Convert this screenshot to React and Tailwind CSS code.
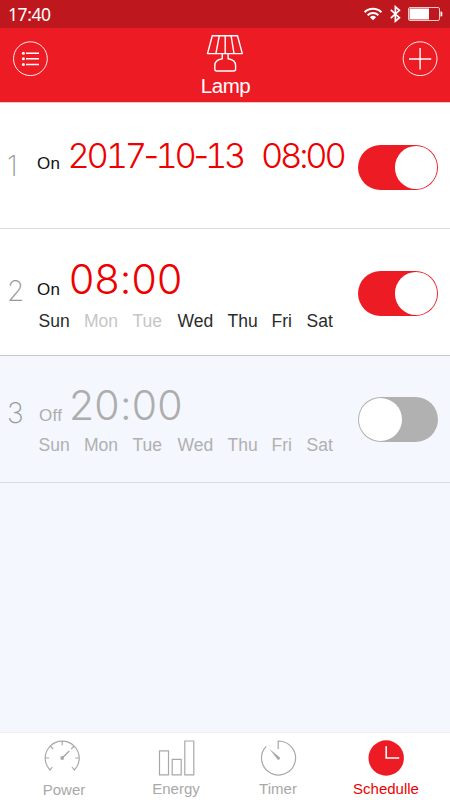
import React, { useState } from 'react';

const SCHEDULES = [
  { id: 1, action: 'On', date: ['2017', '10', '13'], time: '08:00', enabled: true },
  { id: 2, action: 'On', time: '08:00', enabled: true, off: ['Mon', 'Tue'] },
  { id: 3, action: 'Off', time: '20:00', enabled: false, off: [] },
];

const DAYS = [
  { name: 'Sun', width: 'w-[45.5px]' },
  { name: 'Mon', width: 'w-[48.5px]' },
  { name: 'Tue', width: 'w-[45px]' },
  { name: 'Wed', width: 'w-[50px]' },
  { name: 'Thu', width: 'w-[44px]' },
  { name: 'Fri', width: 'w-[35px]' },
  { name: 'Sat', width: 'w-[32px]' },
];

const StatusBar = () => (
  <div className="flex h-7 items-center justify-between bg-[#be171d] pl-2 pr-[7px] text-white">
    <span className="font-['Noto_Sans',sans-serif] text-[17.5px] leading-7 tracking-[-0.4px]">17:40</span>
    <div className="flex items-center">
      <svg width="20" height="14" viewBox="0 0 20 14" fill="none" stroke="#fff" strokeWidth="2">
        <path d="M1.6 5.2a12 12 0 0 1 16.8 0" />
        <path d="M4.6 8.2a7.8 7.8 0 0 1 10.8 0" />
        <path d="M10 13.2 6.9 10.3a4.5 4.5 0 0 1 6.2 0z" fill="#fff" stroke="none" />
      </svg>
      <svg className="ml-[7px]" width="11" height="18" viewBox="0 0 11 18" fill="none" stroke="#fff" strokeWidth="1.7">
        <path d="M0.8 4.8 9.4 12.7 5.4 16.2V1.8l4 3.5L0.8 13.2" />
      </svg>
      <svg className="ml-[7px]" width="35" height="14" viewBox="0 0 35 14">
        <rect x="0.5" y="0.5" width="31" height="13" rx="1.5" fill="none" stroke="#f3c9cb" />
        <rect x="1.5" y="1.5" width="19.5" height="11" fill="#fff" />
        <path d="M32.5 4.5h0.6a1.2 1.2 0 0 1 1.2 1.2v2.6a1.2 1.2 0 0 1-1.2 1.2h-0.6z" fill="#fff" />
      </svg>
    </div>
  </div>
);

const Header = () => (
  <header className="flex h-[75px] items-start justify-between border-b border-[#eec5ca] bg-[#ed1c24] px-3 text-white">
    <button className="mt-3 h-9 w-9">
      <svg width="36" height="36" viewBox="0 0 36 36" fill="none" stroke="#fff">
        <circle cx="18.4" cy="18.7" r="16.9" strokeWidth="0.9" />
        <path d="M14 13.2h13M14 18.7h13M14 24.4h13" strokeWidth="1.5" />
        <g fill="#fff" stroke="none">
          <circle cx="11.4" cy="13.2" r="1.5" />
          <circle cx="11.4" cy="18.7" r="1.5" />
          <circle cx="11.4" cy="24.4" r="1.5" />
        </g>
      </svg>
    </button>
    <div className="flex flex-col items-center pt-1.5">
      <svg width="38" height="40" viewBox="0 0 38 40" fill="none" stroke="#fff" strokeWidth="1.4" strokeLinejoin="round">
        <path d="M6.3 1.7h25.2l4.8 17.9H1.5z" />
        <path d="M13.3 1.7 9.9 19.6M19.2 1.7v17.9M25.1 1.7l2.9 17.9" />
        <path d="M16.3 19.6v5.2c-5 .8-7.5 3-7.5 6.7V35q0 2 2 2h16.8q2 0 2-2v-3.5c0-3.7-2.5-5.9-7.5-6.7v-5.2" />
      </svg>
      <h1 className="pl-px font-['Liberation_Sans',sans-serif] text-[20.5px] leading-6 tracking-[-0.5px]">Lamp</h1>
    </div>
    <button className="mt-3 h-9 w-9">
      <svg width="36" height="36" viewBox="0 0 36 36" fill="none" stroke="#fff">
        <circle cx="18.1" cy="18.7" r="16.9" strokeWidth="0.9" />
        <path d="M7 19h22.2M18.1 8v21.6" strokeWidth="1.4" />
      </svg>
    </button>
  </header>
);

const Toggle = ({ checked, onChange }) => (
  <button
    role="switch"
    aria-checked={checked}
    onClick={onChange}
    className={`flex h-[45px] w-20 items-center rounded-full px-px ${checked ? 'justify-end bg-[#ed1c24]' : 'justify-start bg-[#b1b1b1]'}`}
  >
    <span className="h-[42.5px] w-[42.5px] rounded-full bg-white" />
  </button>
);

const DateTime = ({ date, time }) => (
  <span className="-ml-[1.5px] flex text-[34.5px] font-light leading-10 tracking-[-3.2px] text-[#ee0000]">
    <span className="w-[76px] tabular-nums">{date[0]}</span>
    <span className="w-3">-</span>
    <span className="w-[38px] tabular-nums">{date[1]}</span>
    <span className="w-[11.5px]">-</span>
    <span className="w-[56px] tabular-nums">{date[2]}</span>
    <span className="tabular-nums">{time}</span>
  </span>
);

const ScheduleRow = ({ item, enabled, onToggle }) => (
  <li className={`flex border-b ${item.id === 1 ? 'h-[126px]' : 'h-[127px]'} ${enabled ? 'bg-white' : 'bg-[#f4f7fd]'} ${item.id === 2 ? 'border-[#c3cad2]' : 'border-[#dadcdf]'}`}>
    <span className={`w-[37px] shrink-0 pl-[7px] font-['Inter',sans-serif] text-[28px] font-extralight leading-8 text-[#999] ${item.id === 1 ? 'pt-[47px]' : item.id === 2 ? 'pt-[46px]' : 'pt-[41px]'}`}>
      {item.id}
    </span>
    <div className={`w-[321px] shrink-0 ${item.date ? 'pt-[33px]' : item.id === 2 ? 'pt-[30px]' : 'pt-[29px]'}`}>
      <div className="flex items-baseline font-['Inter',sans-serif]">
        <span className={`w-8 shrink-0 translate-y-px font-['Liberation_Sans',sans-serif] text-[17px] tracking-[0.3px] ${enabled ? 'text-[#111]' : 'pl-0.5 text-[#adadad]'}`}>
          {item.action}
        </span>
        {item.date ? (
          <DateTime date={item.date} time={item.time} />
        ) : (
          <span className={`text-[41px] font-light leading-10 tracking-[0.2px] ${enabled ? 'text-[#ee0000]' : 'text-[#adadad]'}`}>{item.time}</span>
        )}
      </div>
      {item.off && (
        <div className={`flex pl-[1.5px] font-['Liberation_Sans',sans-serif] text-[17.5px] leading-5 ${item.id === 2 ? 'pt-[9px]' : 'pt-[7px]'}`}>
          {DAYS.map(day => (
            <span
              key={day.name}
              className={`shrink-0 ${day.width} ${!enabled ? 'text-[#b0b0b0]' : item.off.includes(day.name) ? 'text-[#c6c6c6]' : 'text-[#2b2b2b]'}`}
            >
              {day.name}
            </span>
          ))}
        </div>
      )}
    </div>
    <div className={item.id === 3 ? 'pt-[41px]' : 'pt-[42px]'}>
      <Toggle checked={enabled} onChange={onToggle} />
    </div>
  </li>
);

const PowerIcon = () => (
  <svg className="-ml-1" width="38" height="38" viewBox="0 0 38 38" fill="none" stroke="currentColor" strokeWidth="1.2">
    <path d="M9.4 28 7 31A17 17 0 1 1 31.4 31L29 28" />
    <path d="M2.2 19h4M32.2 19h4M19.2 2v4.2M7.2 7l3 3M31.2 7l-3 3" />
    <path d="M19.2 19 26.3 12" strokeWidth="1.4" />
    <circle cx="19.2" cy="19" r="1.9" fill="currentColor" stroke="none" />
  </svg>
);

const EnergyIcon = () => (
  <svg width="38" height="38" viewBox="0 0 38 38" fill="none" stroke="currentColor" strokeWidth="1.2">
    <path d="M2.5 11.8h9v24h-9zM15.2 20.3h9v15.5h-9zM27.8 2h9v33.8h-9z" />
  </svg>
);

const TimerIcon = () => (
  <svg width="38" height="38" viewBox="0 0 38 38" fill="none" stroke="currentColor" strokeWidth="1.2">
    <path d="M19.2 10V2A17 17 0 1 1 7.2 7.3" />
    <path d="M10.2 9.8 20.6 18.2a1.5 1.5 0 0 1-2.2 2.1z" fill="currentColor" stroke="none" />
  </svg>
);

const ScheduleIcon = () => (
  <svg width="38" height="38" viewBox="0 0 38 38" fill="none">
    <circle cx="19.2" cy="19" r="17.7" fill="#ed1c24" />
    <path d="M19.2 7.2V19h13" stroke="#fff" strokeWidth="1.6" />
  </svg>
);

const TABS = [
  { name: 'Power', icon: PowerIcon, box: 'ml-[34px] w-[60px]', text: 'pt-[5px]' },
  { name: 'Energy', icon: EnergyIcon, box: 'ml-[52px] w-[60px]', text: 'pt-1' },
  { name: 'Timer', icon: TimerIcon, box: 'ml-[42px] w-[60px]', text: 'pt-1' },
  { name: 'Schedulle', icon: ScheduleIcon, box: 'ml-[42px] w-[72px]', text: 'pt-1' },
];

const App = () => {
  const [enabled, setEnabled] = useState({ 1: true, 2: true, 3: false });
  const [tab, setTab] = useState('Schedulle');

  return (
    <div className="flex h-[800px] w-[450px] flex-col overflow-hidden bg-[#f4f7fd]">
      <StatusBar />
      <Header />
      <ul className="flex-1">
        {SCHEDULES.map(item => (
          <ScheduleRow
            key={item.id}
            item={item}
            enabled={enabled[item.id]}
            onToggle={() => setEnabled(prev => ({ ...prev, [item.id]: !prev[item.id] }))}
          />
        ))}
      </ul>
      <nav className="flex h-[68px] border-t border-[#eceef1] bg-white">
        {TABS.map(({ name, icon: Icon, box, text }) => (
          <button
            key={name}
            onClick={() => setTab(name)}
            className={`flex flex-col items-center pt-1.5 ${box} ${tab === name ? 'text-[#ee0000]' : 'text-[#a8a8a8]'}`}
          >
            <Icon />
            <span className={`font-['Liberation_Sans',sans-serif] text-[15px] leading-4 ${text}`}>{name}</span>
          </button>
        ))}
      </nav>
    </div>
  );
};

export default App;
